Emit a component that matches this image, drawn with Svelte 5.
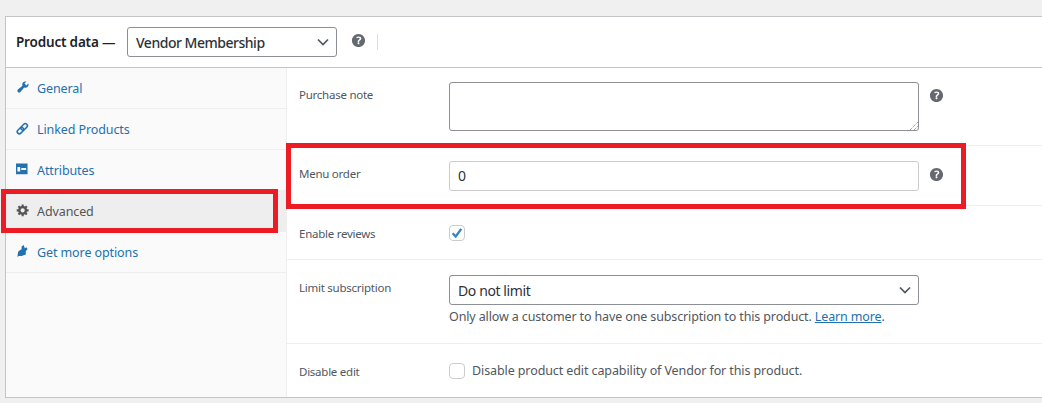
<script>
	const tabs = [
		{ id: 'general', label: 'General' },
		{ id: 'linked', label: 'Linked Products' },
		{ id: 'attributes', label: 'Attributes' },
		{ id: 'advanced', label: 'Advanced', active: true },
		{ id: 'more', label: 'Get more options' }
	];

	const chevron = 'M5 7.5l5 5 5-5';
	const help =
		'M17 10c0-3.87-3.14-7-7-7-3.87 0-7 3.13-7 7s3.13 7 7 7c3.86 0 7-3.13 7-7zm-6.3 1.48H9.14v-.43c0-.38.08-.7.24-.98s.46-.57.88-.89c.41-.29.68-.53.81-.71.14-.18.2-.39.2-.62 0-.25-.09-.44-.28-.58-.19-.13-.45-.19-.79-.19-.58 0-1.25.19-2 .57l-.64-1.28c.87-.49 1.8-.74 2.77-.74.81 0 1.45.2 1.92.58.48.39.71.91.71 1.55 0 .43-.09.8-.29 1.11-.19.32-.57.67-1.11 1.05-.38.28-.61.49-.71.63-.1.15-.15.34-.15.57v.36zm-1.47 2.23c-.19-.18-.28-.43-.28-.75 0-.33.09-.58.27-.76.18-.17.44-.26.78-.26.33 0 .59.09.77.27.18.18.27.43.27.75 0 .31-.09.56-.27.74-.18.19-.44.28-.77.28-.34 0-.6-.09-.77-.27z';
</script>

{#snippet helpIcon()}
	<svg class="help" viewBox="2 2 16 16" width="15" height="15"><path d={help} fill="#646970" /></svg>
{/snippet}

{#snippet tabIcon(id)}
	<svg class="tab-icon" viewBox="0 0 20 20" width="14" height="14">
		{#if id === 'general'}
			<path fill="currentColor" d="M16.68 9.77c-1.34 1.34-3.3 1.67-4.95.99l-5.41 6.52c-.99.99-2.59.99-3.58 0s-.99-2.59 0-3.57l6.52-5.42c-.68-1.65-.35-3.61.99-4.95 1.28-1.28 3.12-1.62 4.72-1.06l-2.89 2.89 2.82 2.82 2.86-2.87c.53 1.58.18 3.39-1.08 4.65z" />
		{:else if id === 'linked'}
			<g fill="none" stroke="currentColor" stroke-width="2.2" transform="translate(-1 1) rotate(-45 10 10)">
				<rect x="1" y="7" width="10.5" height="6" rx="3" />
				<rect x="8.5" y="7" width="10.5" height="6" rx="3" />
			</g>
		{:else if id === 'attributes'}
			<path fill="currentColor" fill-rule="evenodd" d="M0 2h16.5v15.5H0zM2 7h4v6.5H2zM7.5 8.5h7v3h-7z" />
		{:else if id === 'advanced'}
			<path fill="currentColor" d="M18 12h-2.18c-.17.7-.44 1.35-.81 1.93l1.54 1.54-2.1 2.1-1.54-1.54c-.58.36-1.23.63-1.91.79V19H8v-2.18c-.68-.16-1.33-.43-1.91-.79l-1.54 1.54-2.12-2.12 1.54-1.54c-.36-.58-.63-1.23-.79-1.91H1V9.03h2.17c.16-.7.44-1.35.8-1.94L2.43 5.55l2.1-2.1 1.54 1.54c.58-.37 1.24-.64 1.93-.81V2h3v2.18c.68.16 1.33.43 1.91.79l1.54-1.54 2.12 2.12-1.54 1.54c.36.59.64 1.24.8 1.94H18V12zm-8.5 1.5c1.66 0 3-1.34 3-3s-1.34-3-3-3-3 1.34-3 3 1.34 3 3 3z" />
		{:else}
			<path fill="currentColor" d="M2 18.5L3 11L6 8.5L8 7.5L8 3.5L11 1.5L12.5 6L15 4.5L16.5 7.5L14 10L14 15L8 17L4 17z" />
		{/if}
	</svg>
{/snippet}

<div class="page">
	<section class="panel">
		<header class="head">
			<strong>Product data —</strong>
			<div class="select head-select">
				<span>Vendor Membership</span>
				<svg viewBox="0 0 20 20" width="20" height="20"><path d={chevron} fill="none" stroke="#50575e" stroke-width="1.7" /></svg>
			</div>
			{@render helpIcon()}
			<span class="sep"></span>
		</header>

		<div class="body">
			<ul class="tabs">
				{#each tabs as tab}
					<li class:active={tab.active}>
						{@render tabIcon(tab.id)}
						<span>{tab.label}</span>
					</li>
				{/each}
			</ul>

			<div class="fields">
				<div class="row note">
					<span class="label">Purchase note</span>
					<div class="textarea">
						<svg class="grip" viewBox="0 0 9 9" width="9" height="9"><path d="M1 9l8-8M5 9l4-4" stroke="#777" stroke-width="1" stroke-dasharray="1 1" fill="none" /></svg>
					</div>
					{@render helpIcon()}
				</div>
				<div class="row order">
					<span class="label">Menu order</span>
					<div class="input">0</div>
					{@render helpIcon()}
				</div>
				<div class="row reviews">
					<span class="label">Enable reviews</span>
					<span class="check">
						<svg viewBox="0 0 16 16" width="16" height="16"><path d="M3.6 8.2l3.1 3.3 5.6-7.6" fill="none" stroke="#3582c4" stroke-width="2.3" /></svg>
					</span>
				</div>
				<div class="row limit">
					<span class="label">Limit subscription</span>
					<div class="stack">
						<div class="select wide">
							<span>Do not limit</span>
							<svg viewBox="0 0 20 20" width="20" height="20"><path d={chevron} fill="none" stroke="#50575e" stroke-width="1.7" /></svg>
						</div>
						<p>Only allow a customer to have one subscription to this product. <a href="#top">Learn more</a>.</p>
					</div>
				</div>
				<div class="row disable">
					<span class="label">Disable edit</span>
					<span class="check"></span>
					<span class="check-text">Disable product edit capability of Vendor for this product.</span>
				</div>
			</div>
		</div>
	</section>

	<div class="mark mark-tab"></div>
	<div class="mark mark-row"></div>
</div>

<style>
	:global(body) {
		background: #f0f0f1;
	}

	.page {
		position: relative;
		height: 403px;
		overflow: hidden;
		padding: 16px 0 0 5px;
		box-sizing: border-box;
		font-family: "Noto Sans", "Open Sans", sans-serif;
		font-size: 13px;
		color: #50575e;
	}

	.panel {
		width: 1037px;
		height: 382px;
		box-sizing: border-box;
		background: #fff;
		border: 1px solid #c3c4c7;
		border-right: none;
	}

	.head {
		display: flex;
		align-items: center;
		height: 51px;
		box-sizing: border-box;
		border-bottom: 1px solid #c3c4c7;
		padding-left: 10px;
		color: #1d2327;
	}

	.head strong {
		font-size: 13.5px;
		font-weight: 600;
		width: 111px;
		white-space: nowrap;
		letter-spacing: -0.18px;
	}

	.select {
		display: flex;
		align-items: center;
		justify-content: space-between;
		height: 30px;
		box-sizing: border-box;
		background: #fff;
		border: 1px solid #8c8f94;
		border-radius: 3px;
		padding: 0 3px 0 8px;
		font-size: 14px;
		color: #2c3338;
		letter-spacing: -0.4px;
	}

	.head-select {
		width: 210px;
		font-weight: 500;
		letter-spacing: -0.48px;
	}

	.head .help {
		margin: -4px 0 0 14px;
	}

	.sep {
		width: 1px;
		height: 16px;
		background: #ddd;
		margin-left: 11px;
	}

	.body {
		display: flex;
		height: 329px;
	}

	.tabs {
		list-style: none;
		margin: 0;
		padding: 0;
		width: 280px;
		background: #fafafa;
		border-right: 1px solid #eee;
		flex: none;
	}

	.tabs li {
		display: flex;
		align-items: center;
		height: 40px;
		border-bottom: 1px solid #eee;
		padding-left: 10px;
		color: #2271b1;
		font-size: 12.5px;
		letter-spacing: -0.1px;
	}

	.tabs li.active {
		background: #eee;
		color: #555;
		border-bottom-color: #eee;
	}

	.tab-icon {
		margin: -3px 7px 0 0;
		flex: none;
		width: 14px;
	}

	.fields {
		flex: 1;
	}

	.row {
		display: flex;
		align-items: flex-start;
		box-sizing: border-box;
		padding-left: 12px;
		border-bottom: 1px solid #eee;
	}

	.row:last-child {
		border-bottom: none;
	}

	.label {
		width: 150px;
		flex: none;
		font-size: 11.5px;
		letter-spacing: -0.25px;
		line-height: 16px;
	}

	.note {
		height: 78px;
		padding-top: 14px;
	}

	.note .label {
		margin-top: 5px;
	}

	.order {
		height: 60px;
		padding-top: 15px;
	}

	.order .label {
		margin-top: 5px;
	}

	.reviews {
		height: 54px;
		padding-top: 19px;
	}

	.reviews .label {
		margin-top: 1px;
	}

	.limit {
		height: 84px;
		padding-top: 15px;
	}

	.limit .label {
		margin-top: 5px;
	}

	.disable {
		height: 53px;
		padding-top: 19px;
	}

	.disable .label {
		margin-top: 1px;
	}

	.textarea,
	.input {
		position: relative;
		width: 470px;
		box-sizing: border-box;
		border-radius: 3px;
		background: #fff;
	}

	.textarea {
		height: 49px;
		border: 1px solid #8c8f94;
	}

	.grip {
		position: absolute;
		right: 0;
		bottom: 0;
	}

	.input {
		height: 30px;
		border: 1px solid #ccc;
		padding-left: 8px;
		line-height: 28px;
		font-size: 14px;
		color: #2c3338;
	}

	.row .help {
		margin: 6px 0 0 10px;
	}

	.check {
		width: 16px;
		height: 16px;
		box-sizing: border-box;
		border: 1px solid #ccc;
		border-radius: 4px;
		background: #fff;
		flex: none;
		display: block;
		position: relative;
	}

	.check svg {
		position: absolute;
		left: -1px;
		top: -1px;
	}

	.check-text {
		margin-left: 7px;
		font-size: 12.5px;
		line-height: 16px;
		letter-spacing: -0.1px;
	}

	.stack {
		width: 470px;
	}

	.wide {
		width: 470px;
	}

	.stack p {
		margin: 3px 0 0;
		font-size: 12.5px;
		white-space: nowrap;
		line-height: 18px;
		letter-spacing: -0.13px;
	}

	.stack a {
		color: #2271b1;
	}

	.mark {
		position: absolute;
		box-sizing: border-box;
		border: 5px solid #ed1c24;
	}

	.mark-tab {
		left: 1px;
		top: 189px;
		width: 277px;
		height: 44px;
	}

	.mark-row {
		left: 286px;
		top: 143px;
		width: 680px;
		height: 66px;
	}
</style>
